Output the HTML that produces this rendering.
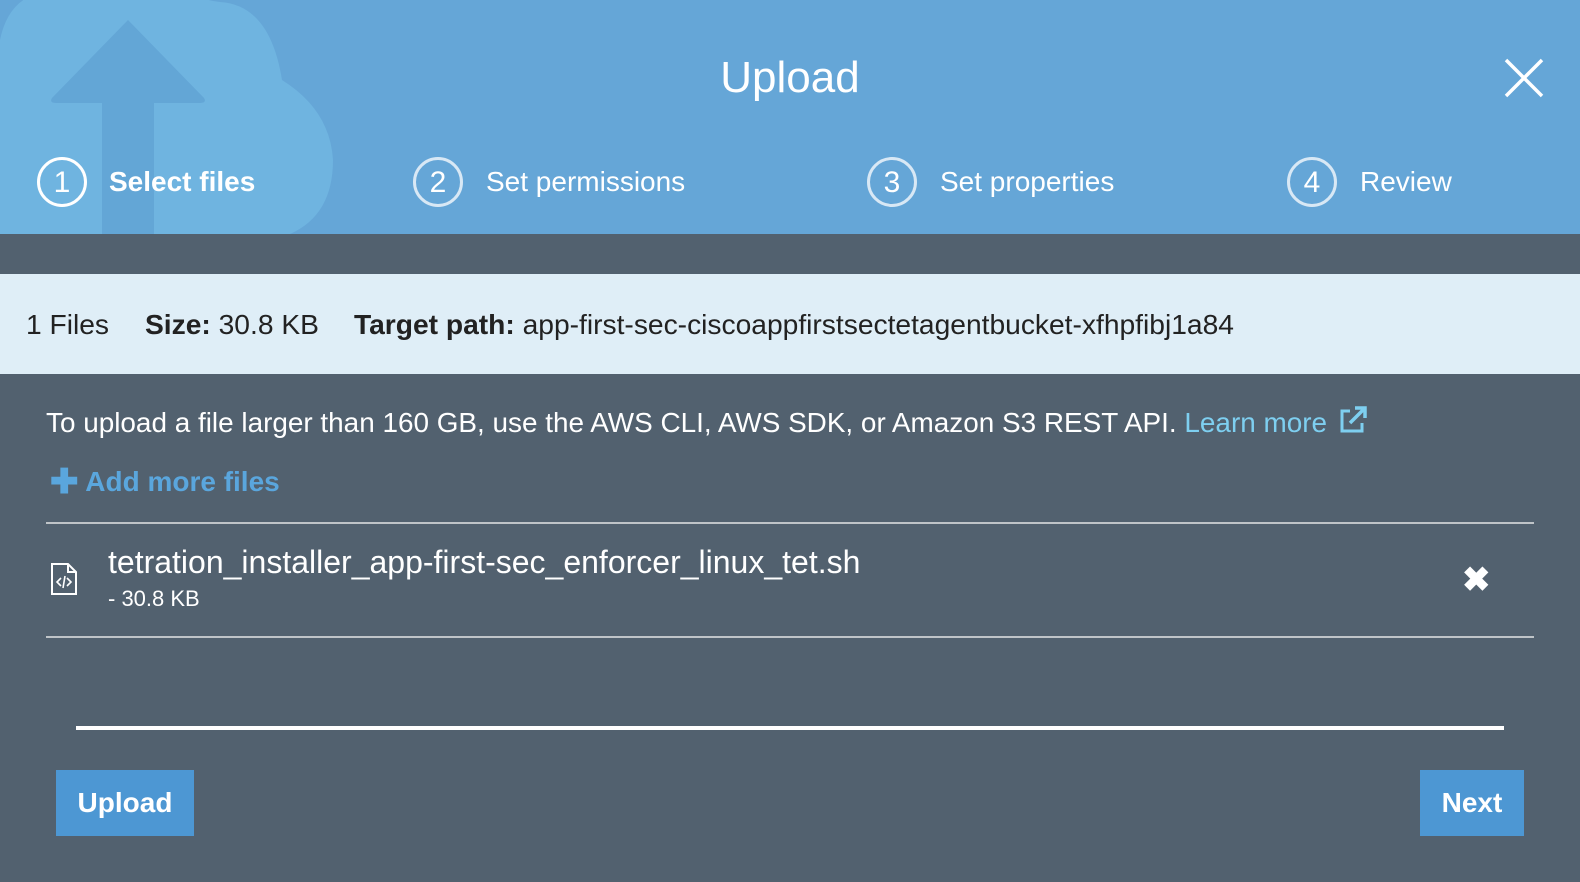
<!DOCTYPE html>
<html><head><meta charset="utf-8"><style>
body{margin:0;width:1580px;height:882px;overflow:hidden;background:#52616f;font-family:"Liberation Sans",Arial,sans-serif;color:#fff;position:relative}
.a{position:absolute;white-space:nowrap}
.hdr{position:absolute;left:0;top:0;width:1580px;height:234px;background:#65a6d7;overflow:hidden}
.circ{position:absolute;width:50px;height:50px;border:3px solid #fff;border-radius:50%;box-sizing:border-box;font-size:30px;text-align:center;line-height:46px}
.step{font-size:28px;top:166px}
.info{position:absolute;left:0;top:274px;width:1580px;height:100px;background:#dfeef7;color:#222;font-size:28.2px}
.btn{position:absolute;background:#4d97d3;font-size:28px;font-weight:bold;text-align:center;line-height:66px;height:66px}
</style></head><body>
<div class="hdr">
<svg width="340" height="234" style="position:absolute;left:0;top:0">
<path d="M0 234 L0 40 Q10 -10 60 -10 L190 -10 Q200 0 220 2 Q270 5 282 80 Q330 110 333 160 Q333 215 290 234 Z" fill="#6fb4e0"/>
<path d="M128 20 L204 98 Q207 103 200 103 L154 103 L154 234 L102 234 L102 103 L56 103 Q49 103 52 98 Z" fill="#63a6d6"/>
</svg>
<div class="a" style="left:0;width:1580px;text-align:center;top:53px;font-size:44px">Upload</div>
<svg class="a" style="left:1504px;top:58px" width="40" height="40"><path d="M2 2L38 38M38 2L2 38" stroke="#fff" stroke-width="3.5"/></svg>
<div class="circ" style="left:37px;top:157px">1</div><div class="a step" style="left:109px;font-weight:bold">Select files</div>
<div class="circ" style="left:413px;top:157px;border-color:#d8e8f5">2</div><div class="a step" style="left:486px">Set permissions</div>
<div class="circ" style="left:867px;top:157px;border-color:#d8e8f5">3</div><div class="a step" style="left:940px">Set properties</div>
<div class="circ" style="left:1287px;top:157px;border-color:#d8e8f5">4</div><div class="a step" style="left:1360px">Review</div>
</div>
<div class="info"><div class="a" style="left:26px;top:34px">1 Files</div><div class="a" style="left:145px;top:34px"><b>Size:</b> 30.8 KB</div><div class="a" style="left:354px;top:34px"><b>Target path:</b> app-first-sec-ciscoappfirstsectetagentbucket-xfhpfibj1a84</div></div>
<div class="a" style="left:46px;top:407px;font-size:27.9px">To upload a file larger than 160 GB, use the AWS CLI, AWS SDK, or Amazon S3 REST API. <span style="color:#7ecff0">Learn more</span></div>
<svg class="a" style="left:1338px;top:405px" width="30" height="30"><path d="M12 6H4v20h20v-8" fill="none" stroke="#7ecff0" stroke-width="3"/><path d="M12 18L26 4M17 3h10v10" fill="none" stroke="#7ecff0" stroke-width="3.5"/></svg>
<div class="a" style="left:50px;top:462px;font-size:28px;font-weight:bold;color:#5aa6dd"><span style="font-size:34px;vertical-align:-2px">✚</span> Add more files</div>
<div class="a" style="left:46px;top:522px;width:1488px;height:2px;background:#bfc4c8"></div>
<svg class="a" style="left:50px;top:562px" width="28" height="34"><path d="M2 2h16l8 8v22H2Z M18 2v8h8" fill="none" stroke="#fff" stroke-width="2"/><path d="M11 16l-4 4 4 4M17 16l4 4-4 4M15 14l-2 12" fill="none" stroke="#fff" stroke-width="1.6"/></svg>
<div class="a" style="left:108px;top:544px;font-size:32px">tetration_installer_app-first-sec_enforcer_linux_tet.sh</div>
<div class="a" style="left:108px;top:586px;font-size:22px">- 30.8 KB</div>
<div class="a" style="left:1462px;top:560px;font-size:34px;font-weight:bold">✖</div>
<div class="a" style="left:46px;top:636px;width:1488px;height:2px;background:#bfc4c8"></div>
<div class="a" style="left:76px;top:726px;width:1428px;height:4px;background:#fff"></div>
<div class="btn" style="left:56px;top:770px;width:138px">Upload</div>
<div class="btn" style="left:1420px;top:770px;width:104px">Next</div>
</body></html>
